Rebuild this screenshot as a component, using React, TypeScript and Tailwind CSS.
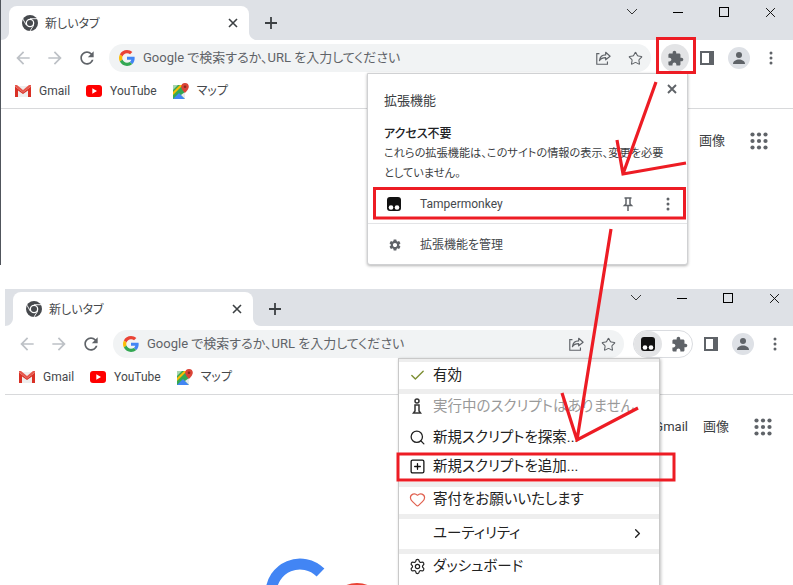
import { Check, ChevronRight, Heart, Search, Settings, SquarePlus, Star } from "lucide-react";

const Chrome = () => (
  <svg width="16" height="16" viewBox="0 0 16 16">
    <circle cx="8" cy="8" r="8" fill="#46494d" />
    <circle cx="8" cy="8" r="4.3" fill="#fff" />
    <circle cx="8" cy="8" r="3" fill="#46494d" />
    <path d="M8 3.7h7M4.3 10.2 1 4.2M11.7 10.2 8 16" stroke="#fff" strokeWidth="0.9" />
  </svg>
);

const CloseX = ({ size = 10, color = "#3c4043", width = 1.6 }: { size?: number; color?: string; width?: number }) => (
  <svg width={size} height={size} viewBox="0 0 10 10" stroke={color} strokeWidth={width} fill="none">
    <path d="M1 1l8 8M9 1l-8 8" />
  </svg>
);

const Material = ({ d, color, size = 20 }: { d: string; color: string; size?: number }) => (
  <svg width={size} height={size} viewBox="0 0 24 24" fill={color}>
    <path d={d} />
  </svg>
);

const backPath = "M20 11H7.83l5.59-5.59L12 4l-8 8 8 8 1.41-1.41L7.83 13H20v-2z";
const forwardPath = "M4 11h12.17l-5.59-5.59L12 4l8 8-8 8-1.41-1.41L16.17 13H4v-2z";
const reloadPath =
  "M17.65 6.35C16.2 4.9 14.21 4 12 4c-4.42 0-7.99 3.58-7.99 8s3.57 8 7.99 8c3.73 0 6.84-2.55 7.73-6h-2.08c-.82 2.33-3.04 4-5.65 4-3.31 0-6-2.69-6-6s2.69-6 6-6c1.66 0 3.14.69 4.22 1.78L13 11h7V4l-2.35 2.35z";
const puzzlePath =
  "M20.5 11H19V7c0-1.1-.9-2-2-2h-4V3.5C13 2.12 11.88 1 10.5 1S8 2.12 8 3.5V5H4c-1.1 0-1.99.9-1.99 2v3.8H3.5c1.49 0 2.7 1.21 2.7 2.7s-1.21 2.7-2.7 2.7H2V20c0 1.1.9 2 2 2h3.8v-1.5c0-1.49 1.21-2.7 2.7-2.7 1.49 0 2.7 1.21 2.7 2.7V22H17c1.1 0 2-.9 2-2v-4h1.5c1.38 0 2.5-1.12 2.5-2.5S21.88 11 20.5 11z";
const gearPath =
  "M19.14 12.94c.04-.3.06-.61.06-.94 0-.32-.02-.64-.07-.94l2.03-1.58a.49.49 0 0 0 .12-.61l-1.92-3.32a.488.488 0 0 0-.59-.22l-2.39.96c-.5-.38-1.03-.7-1.62-.94l-.36-2.54a.484.484 0 0 0-.48-.41h-3.84c-.24 0-.43.17-.47.41l-.36 2.54c-.59.24-1.13.57-1.62.94l-2.39-.96c-.22-.08-.47 0-.59.22L2.74 8.87c-.12.21-.08.47.12.61l2.03 1.58c-.05.3-.09.63-.09.94s.02.64.07.94l-2.03 1.58a.49.49 0 0 0-.12.61l1.92 3.32c.12.22.37.29.59.22l2.39-.96c.5.38 1.03.7 1.62.94l.36 2.54c.05.24.24.41.48.41h3.84c.24 0 .44-.17.47-.41l.36-2.54c.59-.24 1.13-.56 1.62-.94l2.39.96c.22.08.47 0 .59-.22l1.92-3.32c.12-.22.07-.47-.12-.61l-2.01-1.58zM12 15.6c-1.98 0-3.6-1.62-3.6-3.6s1.62-3.6 3.6-3.6 3.6 1.62 3.6 3.6-1.62 3.6-3.6 3.6z";

const GoogleG = () => (
  <svg width="16" height="16" viewBox="0 0 48 48">
    <path fill="#EA4335" d="M24 9.5c3.54 0 6.71 1.22 9.21 3.6l6.85-6.85C35.9 2.38 30.47 0 24 0 14.62 0 6.51 5.38 2.56 13.22l7.98 6.19C12.43 13.72 17.74 9.5 24 9.5z" />
    <path fill="#4285F4" d="M46.98 24.55c0-1.57-.15-3.09-.38-4.55H24v9.02h12.94c-.58 2.96-2.26 5.48-4.78 7.18l7.73 6c4.51-4.18 7.09-10.36 7.09-17.65z" />
    <path fill="#FBBC05" d="M10.53 28.59c-.48-1.45-.76-2.99-.76-4.59s.27-3.14.76-4.59l-7.98-6.19C.92 16.46 0 20.12 0 24c0 3.88.92 7.54 2.56 10.78l7.97-6.19z" />
    <path fill="#34A853" d="M24 48c6.48 0 11.93-2.13 15.89-5.81l-7.73-6c-2.15 1.45-4.92 2.3-8.16 2.3-6.26 0-11.57-4.22-13.47-9.91l-7.98 6.19C6.51 42.62 14.62 48 24 48z" />
  </svg>
);

const ShareIcon = () => (
  <svg width="16" height="16" viewBox="0 0 18 18" fill="none" stroke="#5f6368" strokeWidth="1.300">
    <path d="M5 4H2v12h12v-3" />
    <path d="M5 12c.5-4 3.5-6.500 7-6.500V2.500l5 4.500-5 4V8.500c-3 0-5.500 1-7 3.500z" strokeLinejoin="round" />
  </svg>
);

const Tamper = ({ size = 14 }: { size?: number }) => (
  <svg width={size} height={size} viewBox="0 0 14 14">
    <path d="M3 0h8a3 3 0 0 1 3 3v8a3 3 0 0 1-3 3H3a3 3 0 0 1-3-3V3a3 3 0 0 1 3-3z" fill="#111" />
    <circle cx="4" cy="10.500" r="2.300" fill="#fff" />
    <circle cx="10" cy="10.500" r="2.300" fill="#fff" />
  </svg>
);

const SidePanel = () => (
  <svg width="14" height="14" viewBox="0 0 14 14">
    <path fillRule="evenodd" d="M0 0h14v14H0zM2 2v10h7V2z" fill="#5f6368" />
  </svg>
);

const Profile = () => (
  <div className="flex h-[22px] w-[22px] items-center justify-center rounded-full bg-[#dee1e6]">
    <svg width="14" height="14" viewBox="0 0 14 14" fill="#5f6368">
      <circle cx="7" cy="4" r="3" />
      <path d="M1 13c0-3 3-4.500 6-4.500s6 1.500 6 4.500z" />
    </svg>
  </div>
);

const Dots = ({ color = "#5f6368" }: { color?: string }) => (
  <svg width="4" height="14" viewBox="0 0 4 14" fill={color}>
    <circle cx="2" cy="2" r="1.500" />
    <circle cx="2" cy="7" r="1.500" />
    <circle cx="2" cy="12" r="1.500" />
  </svg>
);

const GmailIcon = () => (
  <svg width="16" height="12" viewBox="0 0 16 12">
    <path d="M1 1h14v11H1z" fill="#eee" />
    <path d="M0 1.500 8 7.500l8-6V12h-3V5.500L8 9 3 5.500V12H0z" fill="#d93025" />
    <path d="M0 0h2l6 5 6-5h2v1.500L8 7.500 0 1.500z" fill="#e6574c" />
  </svg>
);

const YouTubeIcon = () => (
  <svg width="16" height="12" viewBox="0 0 16 12">
    <rect width="16" height="12" rx="3" fill="#ff0000" />
    <path d="M6.300 3.300 11 6l-4.700 2.700z" fill="#fff" />
  </svg>
);

const MapsIcon = () => (
  <svg width="16" height="16" viewBox="0 0 16 16">
    <path d="M0 2h12v14H0z" fill="#34a853" />
    <path d="M0 16 6 10l6 6z" fill="#4285f4" />
    <path d="M12 9v7L8 12z" fill="#e8eaed" />
    <path d="M0 9 7 2h3L0 12z" fill="#fbbc05" />
    <path d="M0 2h5L0 7z" fill="#a8d5b0" />
    <path d="M12 0a3.800 3.800 0 0 0-3.800 3.800C8.200 6.500 12 10 12 10s3.800-3.500 3.800-6.200A3.800 3.800 0 0 0 12 0z" fill="#db4437" />
    <circle cx="12" cy="3.800" r="1.300" fill="#8a2a20" />
  </svg>
);

const AppsGrid = () => (
  <svg width="18" height="18" viewBox="0 0 18 18" fill="#5f6368">
    {[2.500, 9, 15.500].flatMap((y) => [2.500, 9, 15.500].map((x) => <circle key={`${x}-${y}`} cx={x} cy={y} r="2.100" />))}
  </svg>
);

const Flare = ({ side }: { side: "left" | "right" }) => (
  <svg
    width="8"
    height="8"
    viewBox="0 0 8 8"
    className={side === "left" ? "absolute bottom-0 -left-2" : "absolute bottom-0 -right-2"}
  >
    <path d={side === "left" ? "M8 0v8H0c4.500 0 8-3.500 8-8z" : "M0 0v8h8C3.500 8 0 4.500 0 0z"} fill="#fff" />
  </svg>
);

const ToolBtn = ({ children }: { children: React.ReactNode }) => (
  <div className="flex h-7 w-8 shrink-0 items-center justify-center">{children}</div>
);

interface BrowserProps {
  clipTop: string;
  omnibox: string;
  tampermonkey?: boolean;
  outer: string;
  bodyExtra?: React.ReactNode;
}

const Browser = ({ clipTop, omnibox, tampermonkey, outer, bodyExtra }: BrowserProps) => {
  return (
    <div className={`overflow-hidden bg-white ${outer}`}>
      <div className={`w-[792px] ${clipTop}`}>
        <div className="flex h-10 items-end justify-between bg-[#dee1e6] pl-2">
          <div className="flex items-center">
            <div className="relative flex h-[34px] w-60 items-center rounded-t-lg bg-white pl-[13px] pr-[11px]">
              <Flare side="left" />
              <Flare side="right" />
              <Chrome />
              <span className="ml-[7px] flex-1 pt-px text-xs text-[#45484c]">新しいタブ</span>
              <CloseX />
            </div>
            <svg width="14" height="14" viewBox="0 0 14 14" stroke="#3c4043" strokeWidth="1.800" className="ml-[15px]">
              <path d="M7 1v12M1 7h12" />
            </svg>
          </div>
          <div className="flex h-10 items-start">
            <div className="flex h-6 w-[46px] items-center justify-center">
              <svg width="10" height="6" viewBox="0 0 10 6" fill="none" stroke="#222" strokeWidth="0.900">
                <path d="M0 0l5 5 5-5" />
              </svg>
            </div>
            <div className="flex h-6 w-[46px] items-center justify-center">
              <div className="h-px w-[10px] bg-black" />
            </div>
            <div className="flex h-6 w-[46px] items-center justify-center">
              <div className="h-[10px] w-[10px] border border-black" />
            </div>
            <div className="flex h-6 w-[46px] items-center justify-center">
              <CloseX size={11} color="#111" width={0.900} />
            </div>
          </div>
        </div>
        <div className="flex h-8 items-end pl-[6px]">
          <ToolBtn><Material d={backPath} color="#bdc1c6" /></ToolBtn>
          <ToolBtn><Material d={forwardPath} color="#bdc1c6" /></ToolBtn>
          <ToolBtn><Material d={reloadPath} color="#5f6368" /></ToolBtn>
          <div className={`ml-[6px] flex h-7 shrink-0 items-center rounded-full bg-[#f1f3f4] pl-[10px] ${omnibox}`}>
            <GoogleG />
            <span className="ml-2 flex-1 text-[13px] text-[#5f6368]">Google で検索するか、URL を入力してください</span>
            <ToolBtn><ShareIcon /></ToolBtn>
            <ToolBtn><Star size={15} color="#5f6368" strokeWidth={1.700} /></ToolBtn>
          </div>
          {tampermonkey ? (
            <div className="ml-[9px] flex h-7 w-[60px] shrink-0 items-center rounded-full border border-[#dadce0]">
              <div className="flex h-[26px] w-[28px] items-center justify-center rounded-full bg-[#e3e4e6]">
                <Tamper />
              </div>
              <div className="flex flex-1 items-center justify-center pl-1">
                <Material d={puzzlePath} color="#5f6368" size={17} />
              </div>
            </div>
          ) : (
            <div className="ml-[10px] flex h-7 w-7 shrink-0 items-center justify-center rounded-full bg-[#e3e4e6]">
              <Material d={puzzlePath} color="#5f6368" size={17} />
            </div>
          )}
          <div className="ml-[2px] flex">
            <ToolBtn><SidePanel /></ToolBtn>
            <ToolBtn><Profile /></ToolBtn>
            <ToolBtn><Dots /></ToolBtn>
          </div>
        </div>
        <div className="flex h-[37px] items-center gap-4 border-b border-[#d8d9db] pl-[14px] pt-px text-xs text-[#45484c]">
          <div className="flex items-center gap-2">
            <GmailIcon />
            <span>Gmail</span>
          </div>
          <div className="flex items-center gap-2">
            <YouTubeIcon />
            <span>YouTube</span>
          </div>
          <div className="flex items-center gap-2">
            <MapsIcon />
            <span>マップ</span>
          </div>
        </div>
        <div className="mt-5 flex h-6 items-center justify-end pr-[25px] text-[13px] text-[#3c4043]">
          <span>Gmail</span>
          <span className="ml-[15px]">画像</span>
          <div className="ml-[25px]">
            <AppsGrid />
          </div>
        </div>
        {bodyExtra}
      </div>
    </div>
  );
};

const ExtensionsPopup = () => (
  <div className="absolute left-[367px] top-[73px] w-[321px] rounded-b-[3px] border border-[#d0d1d3] bg-white shadow-[0_1px_3px_rgba(0,0,0,0.3)]">
    <div className="absolute right-[10px] top-[10px]">
      <CloseX size={10} color="#5f6368" width={1.900} />
    </div>
    <div className="px-4 pt-[17px] text-[#3c4043]">
      <div className="text-[13px] leading-5">拡張機能</div>
      <div className="mt-[13px] text-xs leading-5 font-medium text-[#202124]">アクセス不要</div>
      <div className="whitespace-nowrap text-[11.200px] leading-5 text-[#3c4043]">
        これらの拡張機能は、このサイトの情報の表示、変更を必要
        <br />
        としていません。
      </div>
    </div>
    <div className="mt-1 flex h-8 items-center pl-[19px] pr-[17px] text-xs text-[#45484c]">
      <Tamper />
      <span className="ml-[19px] flex-1">Tampermonkey</span>
      <svg width="12" height="14" viewBox="0 0 12 14" fill="none" stroke="#5f6368" strokeWidth="1.500" className="mr-[32px]">
        <path d="M2.500 1h7M4 1v6L2.500 8.500h7L8 7V1M6 8.500V14" />
      </svg>
      <Dots />
    </div>
    <div className="mt-[3px] border-t border-[#e3e4e6]" />
    <div className="flex h-10 items-center pl-[20px] pt-[2px] text-xs text-[#45484c]">
      <Material d={gearPath} color="#5f6368" size={14} />
      <span className="ml-[18px]">拡張機能を管理</span>
    </div>
  </div>
);

const MenuRow = ({ icon, label, muted, trailing }: { icon?: React.ReactNode; label: string; muted?: boolean; trailing?: React.ReactNode }) => (
  <div className="flex h-6 items-center pl-[9px] pr-[14px]">
    <div className="flex w-[18px] justify-center">{icon}</div>
    <span className={`ml-[7px] flex-1 whitespace-nowrap pt-[2px] text-[14.500px] ${muted ? "text-[#999]" : "text-[#222]"}`}>{label}</span>
    {trailing}
  </div>
);

const ScriptMenu = () => (
  <div className="absolute left-[398px] top-[358px] flex w-[262px] flex-col gap-[5px] border-x border-t border-[#c9c9c9] bg-[#eeeeee] pt-[3px] shadow-[1px_1px_3px_rgba(0,0,0,0.25)]">
    <div className="bg-white pb-[2px] pt-px">
      <MenuRow label="有効" icon={<Check size={17} color="#7d8f34" strokeWidth={2} />} />
    </div>
    <div className="flex flex-col bg-white pb-1">
      <MenuRow
        label="実行中のスクリプトはありません"
        muted
        icon={
          <svg width="10" height="16" viewBox="0 0 10 16" fill="none" stroke="#333" strokeWidth="1.500">
            <circle cx="5" cy="3" r="2" />
            <path d="M3 7h4v6l1.500 2h-7L3 13z" />
          </svg>
        }
      />
      <div className="mt-[7px]">
        <MenuRow label="新規スクリプトを探索..." icon={<Search size={17} color="#222" strokeWidth={1.800} />} />
      </div>
      <div className="mt-[5px]">
        <MenuRow label="新規スクリプトを追加..." icon={<SquarePlus size={17} color="#111" strokeWidth={1.800} />} />
      </div>
    </div>
    <div className="bg-white pb-[3px]">
      <MenuRow label="寄付をお願いいたします" icon={<Heart size={17} color="#e0604f" strokeWidth={1.700} />} />
    </div>
    <div className="bg-white pb-1 pt-[2px]">
      <MenuRow label="ユーティリティ" trailing={<ChevronRight size={15} color="#222" strokeWidth={2.200} />} />
    </div>
    <div className="bg-white pb-3">
      <MenuRow label="ダッシュボード" icon={<Settings size={17} color="#222" strokeWidth={1.700} />} />
    </div>
  </div>
);

const Annotations = () => (
  <svg width="793" height="585" viewBox="0 0 793 585" className="pointer-events-none absolute inset-0" fill="none" stroke="#ed1c24">
    <rect x="657.500" y="38.500" width="37" height="34" strokeWidth="3" />
    <rect x="374.500" y="188.500" width="310" height="29.500" strokeWidth="3" />
    <rect x="398" y="454" width="276" height="26" strokeWidth="3" />
    <g strokeWidth="3.200">
      <path d="M656 82 623 174M617 140 623 174 686 163" />
      <path d="M611 229 577 440M562 393 577 440 638 408" />
    </g>
  </svg>
);

export default function App() {
  return (
    <div className="relative h-[585px] w-[793px] overflow-hidden bg-white font-['Roboto','Noto_Sans_CJK_JP',sans-serif] [font-feature-settings:'palt']">
      <Browser outer="h-[265px] border-l border-[#50555c]" clipTop="" omnibox="w-[542px]" />
      <Browser
        outer="ml-[5px] mt-[24px] h-[296px]"
        clipTop="-mt-[3px]"
        omnibox="w-[511px]"
        tampermonkey
        bodyExtra={
          <svg width="120" height="36" viewBox="0 0 120 36" fill="none" className="ml-[255px] mt-[116px]">
            <path d="M11 38A29 29 0 0 1 60.500 17.500" stroke="#4285f4" strokeWidth="11" />
            <circle cx="97" cy="55.500" r="22" stroke="#ea4335" strokeWidth="11" />
          </svg>
        }
      />
      <ExtensionsPopup />
      <ScriptMenu />
      <Annotations />
    </div>
  );
}
